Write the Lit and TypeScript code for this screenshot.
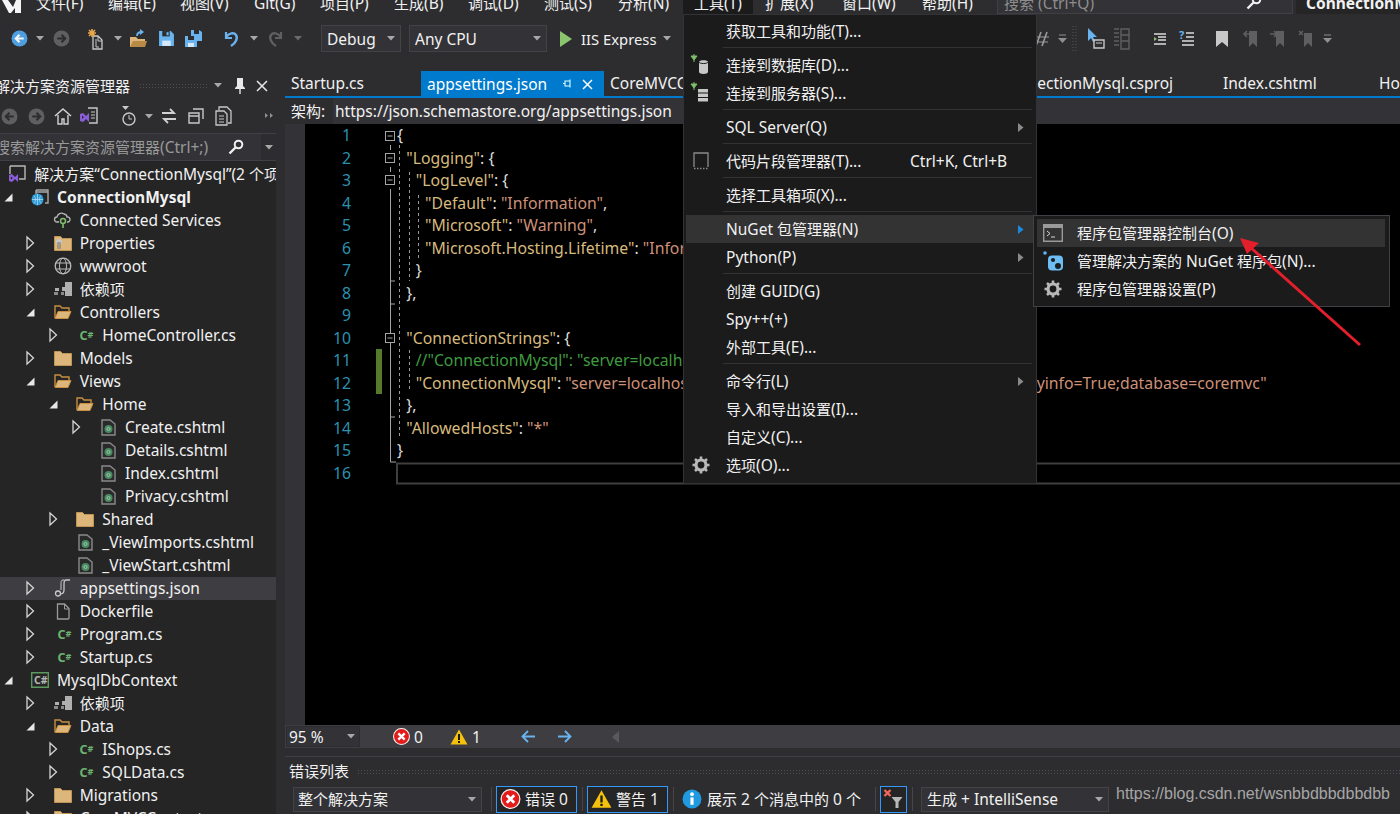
import { LitElement, html, css, svg, TemplateResult } from "lit";
import { customElement } from "lit/decorators.js";

const S = (w: number, h: number, body: unknown, vb = "0 0 16 16") =>
  html`<svg width=${w} height=${h} viewBox=${vb} fill="none">${body}</svg>`;

// CJK runs are set a little smaller than the Latin runs, as in the reference.
const T = (s: string) =>
  s.split(/([\u3000-\u9fff\uff00-\uffef]+)/).map((p, i) => (i % 2 ? html`<span class="cjk">${p}</span>` : p));

const DIM = "#5f5f62";
const ic: Record<string, () => TemplateResult> = {
  back: () => S(17, 17, svg`<circle cx="8" cy="8" r="7.5" fill="#4f9fe0"/><path d="M12 8H5M8 4.5L4.5 8 8 11.5" stroke="#f2f6fa" stroke-width="2"/>`),
  fwdDim: () => S(17, 17, svg`<circle cx="8" cy="8" r="7.5" fill="${DIM}"/><path d="M4 8h7M8 4.5L11.5 8 8 11.5" stroke="#2d2d30" stroke-width="2"/>`),
  backDim: () => S(17, 17, svg`<circle cx="8" cy="8" r="7.5" fill="${DIM}"/><path d="M12 8H5M8 4.5L4.5 8 8 11.5" stroke="#2d2d30" stroke-width="2"/>`),
  caret: () => S(8, 5, svg`<path d="M0 0h8L4 4.5z" fill="#a8a8a8"/>`, "0 0 8 5"),
  caretDim: () => S(8, 5, svg`<path d="M0 0h8L4 4.5z" fill="#6a6a6a"/>`, "0 0 8 5"),
  newp: () => S(20, 22, svg`<path d="M6 8h5l4 4v9H6z" stroke="#c8c8c8" stroke-width="1.3"/><path d="M11 8v5h4" stroke="#c8c8c8"/><path d="M9 11v8h3" stroke="#c8c8c8"/><path d="M5 1v8M1 5h8M2 2l6 6M8 2L2 8" stroke="#e8a84a" stroke-width="1.6"/>`, "0 0 20 22"),
  open: () => S(20, 20, svg`<path d="M1 8h6l2 2h7v8H1z" fill="#dcb67a"/><path d="M1 18l3-6h14l-2 6z" fill="#b98a45"/><path d="M8 7c0-3 2-4 5-4" stroke="#69b4ef" stroke-width="1.8"/><path d="M11 0l4 3-4 3z" fill="#69b4ef"/>`, "0 0 20 20"),
  save: () => S(17, 17, svg`<path d="M1 1h11l3 3v11H1z" fill="#69b4ef"/><path d="M4 1h7v5H4z" fill="#2d2d30"/><path d="M8 2h2v3H8z" fill="#69b4ef"/><path d="M4 10h8v5H4z" fill="#d5e9fa"/>`),
  saveall: () => S(19, 19, svg`<path d="M7 1h8l3 2v9H7z" fill="#69b4ef"/><path d="M10 1h5v4h-5z" fill="#2d2d30"/><path d="M1 7h10l2 2v9H1z" fill="#69b4ef"/><path d="M4 7h6v4H4z" fill="#2d2d30"/><path d="M4 14h6v4H4z" fill="#d5e9fa"/>`, "0 0 19 19"),
  undo: () => S(19, 20, svg`<path d="M4 3v6h6" stroke="#69b4ef" stroke-width="2.2"/><path d="M4 8c3-4 8-5 10-2 2 3 0 8-5 11" stroke="#69b4ef" stroke-width="2.4"/>`, "0 0 19 20"),
  redo: () => S(19, 20, svg`<path d="M15 3v6H9" stroke="${DIM}" stroke-width="2.2"/><path d="M15 8c-3-4-8-5-10-2-2 3 0 8 5 11" stroke="${DIM}" stroke-width="2.4"/>`, "0 0 19 20"),
  play: () => S(14, 18, svg`<path d="M1 1l12 8-12 8z" fill="#8bc66f"/>`, "0 0 14 18"),
  slashes: () => S(20, 20, svg`<path d="M8 3L3 17M14 3L9 17" stroke="#9a9a9a" stroke-width="1.6"/><path d="M2 8h14M1 13h14" stroke="#9a9a9a"/>`, "0 0 20 20"),
  grip: () => S(5, 28, svg`<path d="M1 1v26M4 1v26" stroke="#55555a" stroke-dasharray="1 2"/>`, "0 0 5 28"),
  pointer: () => S(18, 24, svg`<path d="M1 1v13l3-3 2 4 2-1-2-4h4z" fill="#69b4ef"/><path d="M7 13h10v8H7z" stroke="#c8c8c8" stroke-width="1.4"/><path d="M9 16h6" stroke="#c8c8c8"/>`, "0 0 18 24"),
  outlineDim: () => S(18, 22, svg`<path d="M1 1h5M1 5h5M1 9h5M1 13h5M1 17h5" stroke="${DIM}" stroke-width="1.4"/><path d="M8 1h8v20H8zM8 7h8M8 13h8" stroke="${DIM}" stroke-width="1.4"/>`, "0 0 18 22"),
  lines1: () => S(14, 14, svg`<path d="M1 2h12M5 5h8M5 8h8M1 12h12" stroke="#dcdcdc" stroke-width="1.4"/><path d="M1 5l3 2-3 2z" fill="#8bc66f"/>`, "0 0 14 14"),
  lines2: () => S(16, 17, svg`<text x="0" y="9" font-size="11" font-weight="700" fill="#69b4ef" font-family="Noto Sans">?</text><path d="M7 3h8M7 7h8M3 11h12M3 15h12" stroke="#dcdcdc" stroke-width="1.4"/>`, "0 0 16 17"),
  bookmark: () => S(14, 18, svg`<path d="M1 1h12v16l-6-5-6 5z" fill="#c8c8c8"/>`, "0 0 14 18"),
  bmPrev: () => S(16, 18, svg`<path d="M6 1h8v16l-4-4-4 4z" fill="${DIM}"/><path d="M7 4H1M4 1L1 4l3 3" stroke="${DIM}" stroke-width="1.6"/>`, "0 0 16 18"),
  bmNext: () => S(16, 18, svg`<path d="M6 1h8v16l-4-4-4 4z" fill="${DIM}"/><path d="M0 4h6M4 1l3 3-3 3" stroke="${DIM}" stroke-width="1.6"/>`, "0 0 16 18"),
  bmClear: () => S(16, 18, svg`<path d="M6 3h8v14l-4-4-4 4z" fill="${DIM}"/><path d="M1 1l4 4M5 1L1 5" stroke="${DIM}" stroke-width="1.4"/>`, "0 0 16 18"),
  caretBar: () => S(9, 9, svg`<path d="M1 1h7" stroke="#8f8f8f"/><path d="M0 4h9L4.5 9z" fill="#8f8f8f"/>`, "0 0 9 9"),
  home: () => S(18, 18, svg`<path d="M1 9l8-7 8 7" stroke="#d0d0d0" stroke-width="1.6"/><path d="M4 8v9h4v-5h2v5h4V8" stroke="#d0d0d0" stroke-width="1.4"/>`, "0 0 18 18"),
  vsdoc: () => S(20, 18, svg`<path d="M8 1h9v15H9" stroke="#c8c8c8" stroke-width="1.4"/><path d="M11 5h4M11 8h4M11 11h4" stroke="#c8c8c8"/><path d="M0 7l3-1 3 3 3-3v9l-3-3-3 3-3-1z" fill="#8a5ed8"/><path d="M2 8.500v3.500l2-2z" fill="#2d2d30"/>`, "0 0 20 18"),
  clock: () => S(16, 22, svg`<path d="M1 1h7L4.500 5z" fill="#c8c8c8"/><circle cx="8" cy="14" r="6" stroke="#c8c8c8" stroke-width="1.4"/><path d="M8 10v4h3" stroke="#c8c8c8"/>`, "0 0 16 22"),
  sync: () => S(16, 16, svg`<path d="M1 5h12M9 1l4 4-4 0M15 11H3M7 15l-4-4 4 0" stroke="#d0d0d0" stroke-width="1.8"/>`),
  copy: () => S(16, 16, svg`<path d="M5 1h10v10" stroke="#c8c8c8" stroke-width="1.4"/><path d="M1 5h10v10H1zM1 8h10" stroke="#c8c8c8" stroke-width="1.400"/>`),
  docs: () => S(17, 20, svg`<path d="M4 4V1h8l4 4v12h-3" stroke="#c8c8c8" stroke-width="1.3"/><path d="M1 5h8l3 3v11H1z" stroke="#c8c8c8" stroke-width="1.3"/><path d="M4 10h5M4 13h5M4 16h5" stroke="#c8c8c8"/>`, "0 0 17 20"),
  chev: () => S(8, 6, svg`<path d="M0 0l3 2.500L0 5zM5 0l3 2.500L5 5z" fill="#8f8f8f"/>`, "0 0 8 6"),
  key: () => S(16, 16, svg`<circle cx="10.500" cy="5.500" r="3.800" stroke="#f1f1f1" stroke-width="2"/><path d="M7.500 8.500L1.500 14.500" stroke="#f1f1f1" stroke-width="2.400"/>`),
  folder: () => S(18, 16, svg`<path d="M0.500 1.500h6l2 2h9v12H0.500z" fill="#dcb67a" stroke="#c09553"/>`, "0 0 18 16"),
  folderOpen: () => S(18, 16, svg`<path d="M1 14V2h5l2 2h7v3" stroke="#c78f3f" stroke-width="1.400"/><path d="M1 14.500l3-7h13l-3 7z" fill="#dcb67a" stroke="#c78f3f"/>`, "0 0 18 16"),
  props: () => S(18, 16, svg`<path d="M0.500 1.500h6l2 2h9v12H0.500z" fill="#dcb67a" stroke="#c09553"/><circle cx="5" cy="7" r="3" fill="#c8c8c8"/><path d="M5 7v7" stroke="#2d2d30" stroke-width="2.500"/><path d="M5 7v7" stroke="#c8c8c8" stroke-width="1.400"/>`, "0 0 18 16"),
  globe: () => S(18, 18, svg`<circle cx="9" cy="9" r="7.800" stroke="#b8b8b8" stroke-width="1.300"/><ellipse cx="9" cy="9" rx="3.500" ry="7.800" stroke="#b8b8b8"/><path d="M1.500 6h15M1.500 12h15" stroke="#b8b8b8"/>`, "0 0 18 18"),
  deps: () => S(18, 14, svg`<path d="M11 0h7v7h-7zM1 6h4v3H1zM8 5h4v4H8zM11 7h7v7h-7z" fill="#b0b0b0"/><path d="M0 10h4v3H0zM7 10h3v3H7z" fill="#8a8a8a"/>`, "0 0 18 14"),
  cloud: () => S(18, 18, svg`<path d="M5 11H3a2.500 2.500 0 0 1 0-5c.5-3 4-5 7-3 2 .3 3 1.500 3 3a2.500 2.500 0 0 1 1 5h-1" stroke="#b8b8b8" stroke-width="1.300"/><circle cx="9" cy="10" r="2.500" stroke="#7fbf6a" stroke-width="1.500"/><path d="M9 12.500V17" stroke="#7fbf6a" stroke-width="1.600"/>`, "0 0 18 18"),
  cs: () => html`<svg width="16" height="12" viewBox="-2.500 0 16 12"><text x="0" y="11" font-size="12.500" font-weight="700" fill="#6db36f" font-family="Noto Sans">C</text><text x="8" y="9" font-size="9" font-weight="700" fill="#6db36f" font-family="Noto Sans">#</text></svg>`,
  razor: () => S(15, 17, svg`<path d="M1 1h8l5 4v11H1z" stroke="#8a8a8a" stroke-width="1.400" fill="#2a2a2b"/><circle cx="7.500" cy="10" r="4" fill="#4a8a62"/><circle cx="7.500" cy="10" r="1.500" stroke="#9cc8aa"/>`, "0 0 15 17"),
  json: () => S(18, 18, svg`<path d="M16 1h-4c-2 0-2 2-2 4v6c0 3-1 4-4 4" stroke="#c8c8c8" stroke-width="1.300"/><path d="M10 1H9C7 1 7 3 7 5v6" stroke="#c8c8c8"/><circle cx="4" cy="14.500" r="2.500" stroke="#c8c8c8" stroke-width="1.300"/>`, "0 0 18 18"),
  doc: () => S(14, 17, svg`<path d="M1.500 1h7l4.500 4.500V15a1 1 0 0 1-1 1h-10.500z" stroke="#9a9a9a" stroke-width="1.300"/><path d="M8.500 1v5H13" stroke="#9a9a9a"/>`, "0 0 14 17"),
  sln: () => S(18, 18, svg`<path d="M2 1h15v13h-6" stroke="#b8b8b8" stroke-width="1.400"/><path d="M2 1v8" stroke="#b8b8b8" stroke-width="1.400"/><path d="M1 10l3-1 3 3 3-3v8l-3-3-3 3-3-1z" fill="#8a5ed8"/><path d="M2.800 11.500v3l2-1.500z" fill="#252526"/>`, "0 0 18 18"),
  webproj: () => S(18, 17, svg`<path d="M5 1h12v13h-3" stroke="#a8a8a8" stroke-width="1.400"/><path d="M5 1v4M5 3h12" stroke="#a8a8a8" stroke-width="1.400"/><circle cx="6.500" cy="10.500" r="6" fill="#2e9bd6"/><path d="M1 10.500h11M6.500 5v11M3 6.500c2 2.500 2 5.500 0 8M10 6.500c-2 2.500-2 5.500 0 8" stroke="#bfe3f5" stroke-width=".7"/>`, "0 0 18 17"),
  csproj: () => html`<svg width="18" height="16" viewBox="0 0 18 16"><path d="M.7.7h16.600v14.600H.7z" stroke="#5a9a5e" stroke-width="1.400" fill="none"/><text x="3" y="12" font-size="10.500" font-weight="700" fill="#b8b8b8" font-family="Noto Sans">C#</text></svg>`,
  plugDb: () => S(22, 22, svg`<path d="M1 2h6L4 6z M4 0v2M4 6v2" stroke="#7fbf6a" fill="#7fbf6a"/><path d="M9 8c0-2.500 9-2.500 9 0v10c0 2.500-9 2.500-9 0z" fill="#c8c8c8"/><path d="M9 8c0 2 9 2 9 0" stroke="#1b1b1c"/>`, "0 0 22 22"),
  plugSv: () => S(22, 22, svg`<path d="M1 2h6L4 6z M4 0v2M4 6v2" stroke="#7fbf6a" fill="#7fbf6a"/><path d="M8 7h10v3.500H8zM8 11.500h10V15H8zM8 16h10v3.500H8z" fill="#c8c8c8"/>`, "0 0 22 22"),
  snippet: () => S(16, 18, svg`<path d="M1 15V1h14v14" stroke="#8a8a8a" stroke-width="1.300"/><path d="M1 16.500h14" stroke="#8a8a8a" stroke-width="1.300" stroke-dasharray="1.500 1.500"/>`, "0 0 16 18"),
  gear: () => S(18, 18, svg`<circle cx="9" cy="9" r="5" stroke="#b8b8b8" stroke-width="3.200"/><path d="M9 .5v3M9 14.500v3M.5 9h3M14.500 9h3M3 3l2.200 2.200M12.800 12.800L15 15M3 15l2.200-2.200M12.800 5.200L15 3" stroke="#b8b8b8" stroke-width="2.600"/>`, "0 0 18 18"),
  console: () => S(20, 18, svg`<path d="M.7.7h18.600v16.600H.7z" stroke="#9a9a9a" stroke-width="1.400"/><path d="M1 1h18v3H1z" fill="#9a9a9a"/><path d="M4 7l3 2.500L4 12M8 13h4" stroke="#d8d8d8"/>`, "0 0 20 18"),
  nuget: () => S(20, 20, svg`<circle cx="2" cy="2" r="1.800" fill="#5fb4f2"/><rect x="5" y="4.500" width="15" height="15" rx="4" fill="#6cbcf5"/><circle cx="10" cy="9" r="2.100" fill="#1b1b1c"/><circle cx="15" cy="15" r="3" fill="#1b1b1c"/>`, "0 0 20 20"),
  err: () => S(17, 17, svg`<circle cx="8" cy="8" r="7.500" fill="#e51a1a" stroke="#f2f2f2"/><path d="M5 5l6 6M11 5l-6 6" stroke="#fff" stroke-width="2.200"/>`),
  warn: () => S(18, 16, svg`<path d="M9 .5l8.500 15H.5z" fill="#f4c20d"/><path d="M9 5v6M9 12v2" stroke="#1b1b1c" stroke-width="2"/>`, "0 0 18 16"),
  arrL: () => S(15, 13, svg`<path d="M14 6.500H2M7 1L1.500 6.500 7 12" stroke="#69b4ef" stroke-width="1.800"/>`, "0 0 15 13"),
  arrR: () => S(15, 13, svg`<path d="M1 6.500h12M8 1l5.500 5.500L8 12" stroke="#69b4ef" stroke-width="1.800"/>`, "0 0 15 13"),
  triL: () => S(7, 12, svg`<path d="M7 0v12L0 6z" fill="#5a5a5d"/>`, "0 0 7 12"),
  info: () => S(20, 20, svg`<circle cx="9.500" cy="9.500" r="9" fill="#1f9ae0"/><path d="M9.500 8v7" stroke="#fff" stroke-width="3"/><circle cx="9.500" cy="5" r="1.800" fill="#fff"/>`, "0 0 19 19"),
  filter: () => S(20, 20, svg`<path d="M1 1l6 6M7 1L1 7" stroke="#f0685a" stroke-width="2.400"/><path d="M8 8h11l-4 5v6h-3v-6z" fill="#b8b8b8"/>`, "0 0 20 20"),
  pin: () => S(12, 18, svg`<path d="M3 1h6v8l2 2v1H1v-1l2-2z" fill="#e8e8e8"/><path d="M6 12v5" stroke="#e8e8e8" stroke-width="1.400"/>`, "0 0 12 18"),
  pinTab: () => S(11, 11, svg`<path d="M3 3h5v5H3zM1 5.500h2M8 1.500v8" stroke="#dff" stroke-width="1.100"/>`, "0 0 11 11"),
  x: (() => S(12, 12, svg`<path d="M1 1l10 10M11 1L1 11" stroke="#e8e8e8" stroke-width="1.500"/>`, "0 0 12 12")) as () => TemplateResult,
  tri: () => S(6, 9, svg`<path d="M0 0l5.500 4.500L0 9z" fill="#8a8a8a"/>`, "0 0 6 9"),
  triB: () => S(6, 9, svg`<path d="M0 0l5.500 4.500L0 9z" fill="#1a8ae0"/>`, "0 0 6 9"),
  treeO: () => S(9, 14, svg`<path d="M1 1l6.500 6L1 13z" stroke="#d4d4d4" stroke-width="1.300"/>`, "0 0 9 14"),
  treeE: () => S(9, 9, svg`<path d="M8.500.5v8h-8z" fill="#e8e8e8"/>`, "0 0 9 9"),
};

type TI = [number, string];
const mainBar: TI[] = [[19,"back"],[40,"caret"],[61,"fwdDim"],[97,"newp"],[118,"caret"],[139,"open"],[166,"save"],[193,"saveall"],[231,"undo"],[254,"caret"],[275,"redo"],[298,"caretDim"]];
const sideBar: TI[] = [[9,"backDim"],[36,"fwdDim"],[63,"home"],[90,"vsdoc"],[129,"clock"],[149,"caret"],[169,"sync"],[196,"copy"],[223,"docs"],[269,"chev"]];
const rightBar: TI[] = [[1043,"slashes"],[1062,"caretBar"],[1074,"grip"],[1096,"pointer"],[1122,"outlineDim"],[1160,"lines1"],[1187,"lines2"],[1222,"bookmark"],[1251,"bmPrev"],[1278,"bmNext"],[1306,"bmClear"],[1327,"caretBar"]];

type Row = [number, "o" | "e" | "", string, string, string?];
const tree: Row[] = [
  [-1,"","sln","解决方案“ConnectionMysql”(2 个项目)"],
  [0,"e","webproj","ConnectionMysql","bold"],
  [1,"","cloud","Connected Services"],
  [1,"o","props","Properties"],
  [1,"o","globe","wwwroot"],
  [1,"o","deps","依赖项"],
  [1,"e","folderOpen","Controllers"],
  [2,"o","cs","HomeController.cs"],
  [1,"o","folder","Models"],
  [1,"e","folderOpen","Views"],
  [2,"e","folderOpen","Home"],
  [3,"o","razor","Create.cshtml"],
  [3,"","razor","Details.cshtml"],
  [3,"","razor","Index.cshtml"],
  [3,"","razor","Privacy.cshtml"],
  [2,"o","folder","Shared"],
  [2,"","razor","_ViewImports.cshtml"],
  [2,"","razor","_ViewStart.cshtml"],
  [1,"o","json","appsettings.json","sel"],
  [1,"o","doc","Dockerfile"],
  [1,"o","cs","Program.cs"],
  [1,"o","cs","Startup.cs"],
  [0,"e","csproj","MysqlDbContext"],
  [1,"o","deps","依赖项"],
  [1,"e","folderOpen","Data"],
  [2,"o","cs","IShops.cs"],
  [2,"o","cs","SQLData.cs"],
  [1,"o","folder","Migrations"],
  [1,"o","folder","CoreMVCContext"],
];

const code: [number, string, [string, string][]][] = [
  [0,"",[["tp","{"]]],
  [1,"",[["tk",'"Logging"'],["tp",": {"]]],
  [2,"",[["tk",'"LogLevel"'],["tp",": {"]]],
  [3,"",[["tk",'"Default"'],["tp",": "],["ts",'"Information"'],["tp",","]]],
  [3,"",[["tk",'"Microsoft"'],["tp",": "],["ts",'"Warning"'],["tp",","]]],
  [3,"",[["tk",'"Microsoft.Hosting.Lifetime"'],["tp",": "],["ts",'"Information"']]],
  [2,"",[["tp","}"]]],
  [1,"",[["tp","},"]]],
  [1,"",[]],
  [1,"",[["tk",'"ConnectionStrings"'],["tp",": {"]]],
  [2,"chg",[["tc",'//"ConnectionMysql": "server=localhost;uid=root;pwd=123456;port=3306;persist",']]],
  [2,"chg",[["tk",'"ConnectionMysql"'],["tp",": "],["ts",'"server=localhost;uid=root;pwd=12345;port=3306;persistsecurityinfo=True;database=coremvc"']]],
  [1,"",[["tp","},"]]],
  [1,"",[["tk",'"AllowedHosts"'],["tp",": "],["ts",'"*"']]],
  [0,"",[["tp","}"]]],
  [0,"",[]],
];

type MI = { t?: string; icon?: string; key?: string; arrow?: boolean; hot?: boolean; sep?: boolean };
const menu: MI[] = [
  { t: "获取工具和功能(T)..." }, { sep: true },
  { t: "连接到数据库(D)...", icon: "plugDb" }, { t: "连接到服务器(S)...", icon: "plugSv" }, { sep: true },
  { t: "SQL Server(Q)", arrow: true }, { sep: true },
  { t: "代码片段管理器(T)...", icon: "snippet", key: "Ctrl+K, Ctrl+B" }, { sep: true },
  { t: "选择工具箱项(X)..." }, { sep: true },
  { t: "NuGet 包管理器(N)", arrow: true, hot: true }, { t: "Python(P)", arrow: true }, { sep: true },
  { t: "创建 GUID(G)" }, { t: "Spy++(+)" }, { t: "外部工具(E)..." }, { sep: true },
  { t: "命令行(L)", arrow: true }, { t: "导入和导出设置(I)..." }, { t: "自定义(C)..." }, { t: "选项(O)...", icon: "gear" },
];
const sub: MI[] = [
  { t: "程序包管理器控制台(O)", icon: "console", hot: true },
  { t: "管理解决方案的 NuGet 程序包(N)...", icon: "nuget" },
  { t: "程序包管理器设置(P)", icon: "gear" },
];

const menus: [string, number][] = [["文件(F)",36],["编辑(E)",108],["视图(V)",180],["Git(G)",254],["项目(P)",320],["生成(B)",394],["调试(D)",468],["测试(S)",544],["分析(N)",618],["工具(T)",694],["扩展(X)",765],["窗口(W)",842],["帮助(H)",922]];

@customElement("app-root")
export class AppRoot extends LitElement {
  static styles = css`
    :host { display: block; width: 1400px; height: 814px; overflow: hidden; position: relative; background: #2d2d30; color: #f1f1f1;
      font: 15.5px/20px "Noto Sans", "Noto Sans CJK SC", sans-serif; }
    .cjk { font-size: 15px; font-family: "Noto Sans CJK SC", sans-serif; }
    svg { display: block; flex: none; overflow: visible; }
    .titlebar { height: 14px; display: flex; overflow: hidden; }
    .mi { flex: none; margin-top: -8px; line-height: 22px; white-space: nowrap; }
    .search { width: 296px; height: 14px; flex: none; box-sizing: border-box; background: #333337; border: 1px solid #3f3f46; border-top: 0; display: flex; align-items: flex-start; justify-content: space-between; padding: 0 30px 0 6px; color: #8d8d8d; position: absolute; left: 997px; top: 0; }
    .search > span { margin-top: -8px; line-height: 22px; }
    .search svg { margin-top: -6px; }
    .wintitle { position: absolute; left: 1296px; top: 0; right: 0; height: 14px; overflow: hidden; background: #252526; font-weight: 700; padding-left: 10px; }
    .wintitle > span { display: block; margin-top: -8px; line-height: 22px; white-space: nowrap; }

    .cell { width: 20px; flex: none; display: flex; justify-content: center; align-items: center; }
    .toolbar { height: 49px; display: flex; align-items: center; flex: none; }
    .combo { box-sizing: border-box; flex: none; height: 27px; background: #333337; border: 1px solid #434346; display: flex; align-items: center; justify-content: space-between; padding: 0 5px; white-space: nowrap; }
    .debug { width: 80px; margin-left: 13px; }
    .anycpu { width: 138px; margin-left: 8px; }
    .playc { margin-left: 9px; }
    .iis { margin-left: 5px; width: 76px; white-space: nowrap; flex: none; font-size: 14.800px; }

    .main { display: flex; height: 751px; }
    .side { width: 276px; flex: none; background: #252526; display: flex; flex-direction: column; overflow: hidden; }
    .sidehead { background: #2d2d30; flex: none; }
    .stitle { height: 27px; padding-top: 9px; display: flex; align-items: center; }
    .stitle .t { margin-left: -5px; white-space: nowrap; width: 135px; flex: none; }
    .dots { width: 70px; height: 5px; margin-left: 9px; background-image: radial-gradient(#505054 .6px, transparent .8px); background-size: 3px 3px; flex: none; }
    .stitle .c1 { margin-left: 5px; }
    .stitle .c2 { margin-left: 12px; }
    .stitle .c3 { margin-left: 10px; }
    .stool { height: 34px; }
    .ssearch { height: 28px; flex: none; box-sizing: border-box; background: #333337; border-top: 1px solid #3f3f46; border-bottom: 1px solid #3f3f46; display: flex; align-items: center; color: #999; }
    .ssearch .t { margin-left: -5px; flex: 1; white-space: nowrap; overflow: hidden; }
    .ssearch .k { width: 16px; flex: none; margin-right: 25px; }
    .ssearch .dd { width: 15px; align-self: stretch; background: #2d2d30; display: flex; align-items: center; justify-content: center; margin-left: -8px; flex: none; }
    .tree { padding-top: 1.500px; flex: none; }
    .row { height: 23px; display: flex; align-items: center; white-space: nowrap; }
    .row.sel { background: #3e3e42; }
    .row.bold .lab { font-weight: 700; }
    .arr { width: 16px; flex: none; display: flex; justify-content: center; }
    .icn { width: 18px; margin-left: 15px; margin-right: 8px; flex: none; display: flex; justify-content: center; }

    .gap { width: 9px; flex: none; }
    .work { flex: 1; min-width: 0; display: flex; flex-direction: column; }
    .tabs { height: 25px; margin-top: 8px; display: flex; flex: none; white-space: nowrap; overflow: hidden; }
    .tab { flex: none; box-sizing: border-box; padding-left: 6px; line-height: 24px; overflow: hidden; }
    .t1 { width: 136px; }
    .t2 { width: 183px; background: #007acc; color: #fff; display: flex; align-items: center; }
    .t2 span { width: 135px; flex: none; }
    .t2 .x { margin-left: 9px; margin-top: 1px; }
    .t3 { width: 389px; }
    .t4 { width: 224px; }
    .t5 { width: 156px; }
    .blueline { height: 2px; background: #007acc; flex: none; }
    .schema { height: 26px; flex: none; display: flex; align-items: center; padding-left: 6px; }
    .schema .u { margin-left: 5px; flex: 1; height: 100%; padding-left: 2px; display: flex; align-items: center; background: #333337; }
    .schema .l { width: 37px; flex: none; }
    .editor { flex: 1; display: flex; background: #000; position: relative; min-height: 0; }
    .margin { width: 20px; background: #333337; flex: none; }
    .lines { flex: 1; min-width: 0; overflow: hidden; font-size: 15.800px; }
    .ln { height: 22.530px; display: flex; align-items: center; white-space: nowrap; }
    .num { width: 46px; text-align: right; color: #2b91af; flex: none; }
    .bar { width: 6px; margin-left: 25px; align-self: stretch; flex: none; }
    .bar.chg { background: #567a2b; }
    .src { margin-left: 15px; white-space: pre; }
    .tp { color: #dcdcdc; } .tk { color: #d7ba7d; } .ts { color: #ce9178; } .tc { color: #3f9b3f; }
    .over { position: absolute; left: 0; top: 0; pointer-events: none; }

    .status { height: 23px; flex: none; background: #3e3e42; display: flex; align-items: center; }
    .zoom { box-sizing: border-box; width: 74px; height: 21px; margin-left: 1px; background: #333337; border: 1px solid #2d2d30; display: flex; align-items: center; justify-content: space-between; padding: 0 4px 0 2px; }
    .status .v { line-height: 20px; }
    .status .e1 { margin-left: 33px; }
    .status .v1 { margin-left: 4px; }
    .status .e2 { margin-left: 27px; }
    .status .e3 { margin-left: 40px; }
    .status .e4 { margin-left: 21px; }
    .status .e5 { margin-left: 40px; }

    .panel { height: 57px; flex: none; margin-top: 8px; border-top: 1px solid #3f3f46; }
    .ptitle { height: 28px; display: flex; align-items: center; padding-left: 4px; }
    .ptitle .dots { flex: 1; margin-left: 8px; }
    .ptool { display: flex; align-items: center; height: 28px; padding-left: 8px; white-space: nowrap; }
    .pc1 { width: 189px; height: 25px; margin-right: 9px; padding: 0 5px 0 4px; }
    .psep { width: 1px; height: 24px; background: #46464a; flex: none; }
    .tog { box-sizing: border-box; height: 27px; border: 1px solid #3399ff; background: #252526; display: flex; align-items: center; flex: none; width: 81px; padding-left: 3px; gap: 4px; margin: 0 5px 0 4px; }
    .tog svg { width: 21px; height: 20px; }
    .tog.f { width: 27px; padding-left: 2px; }
    .inf { display: flex; align-items: center; gap: 5px; margin-left: 8px; width: 193px; flex: none; }
    .pc2 { width: 188px; height: 25px; margin-left: 8px; padding: 0 5px 0 5px; }
    .wm { font: 16px/20px "Liberation Sans", sans-serif; color: #a6a6a6; margin-left: 7px; margin-top: -10px; flex: none; }

    .menu { position: absolute; background: #1b1b1c; border: 1px solid #333337; box-sizing: border-box; padding: 2px 2px; }
    .m1 { left: 683px; top: 14px; width: 354px; height: 470px; }
    .m2 { left: 1033px; top: 215px; width: 357px; height: 92px; border-color: #3f3f46; padding-top: 3px; }
    .item { height: 28px; display: flex; align-items: center; position: relative; white-space: nowrap; }
    .item.hot { background: #333334; }
    .micon { width: 30px; margin-right: 10px; flex: none; display: flex; justify-content: center; }
    .item .key { position: absolute; left: 224px; }
    .item .ar { position: absolute; right: 10px; }
    .msep { height: 1px; margin: 2px 2px 3px 37px; background: #333337; }
    .m2 .item { margin: 0 1px; }
    .m2 .item.hot { margin-right: 2px; }
    .m2 .micon { width: 31px; margin-right: 9px; }
    .tooltab { position: absolute; left: 683px; top: 0; height: 14px; width: 70px; background: #1b1b1c; overflow: hidden; padding-left: 11px; box-sizing: border-box; }
    .tooltab > span { display: block; margin-top: -8px; line-height: 22px; white-space: nowrap; }
    .arrow { position: absolute; left: 0; top: 0; pointer-events: none; }
  `;

  cells(items: TI[], start: number) {
    let right = start;
    return items.map(([x, n]) => {
      const ml = x - 10 - right;
      right = x + 10;
      return html`<div class="cell" style="margin-left:${ml}px">${ic[n]()}</div>`;
    });
  }

  renderTitle() {
    return html`<div class="titlebar">
      ${S(21, 14, svg`<path d="M2 0h6l5 7 3-7h5v13h-6V8l-4 5H9z" fill="#f5f5f5"/>`, "0 0 21 14")}
      ${menus.map(([t, x], i) => html`<div class="mi" style="width:${(menus[i + 1]?.[1] ?? 997) - x}px;margin-left:${i === 0 ? x - 21 : 0}px">${T(t)}</div>`)}
      <div class="search"><span>${T("搜索 (Ctrl+Q)")}</span>${ic.key()}</div>
      <div class="wintitle"><span>ConnectionMysql</span></div>
    </div>`;
  }

  renderToolbar() {
    return html`<div class="toolbar">
      ${this.cells(mainBar, 0)}
      <div class="combo debug"><span>Debug</span>${ic.caret()}</div>
      <div class="combo anycpu"><span>Any CPU</span>${ic.caret()}</div>
      <div class="cell playc">${ic.play()}</div>
      <div class="iis">IIS Express</div>
      <div class="cell">${ic.caret()}</div>
      ${this.cells(rightBar, 677)}
    </div>`;
  }

  renderSide() {
    return html`<aside class="side">
      <div class="sidehead">
        <div class="stitle"><span class="t">${T("解决方案资源管理器")}</span><div class="dots"></div>
          <div class="c1">${ic.caret()}</div><div class="c2">${ic.pin()}</div><div class="c3">${ic.x()}</div></div>
        <div class="toolbar stool">${this.cells(sideBar, 0)}</div>
      </div>
      <div class="ssearch"><span class="t">${T("搜索解决方案资源管理器(Ctrl+;)")}</span><div class="k">${ic.key()}</div><div class="dd">${ic.caret()}</div></div>
      <div class="tree">
        ${tree.map(([lv, a, i, t, f]) => html`<div class="row ${f ?? ""}">
          <div class="arr" style="margin-left:${lv * 22.67}px">${a === "o" ? ic.treeO() : a === "e" ? ic.treeE() : ""}</div>
          <div class="icn">${ic[i]()}</div><span class="lab">${T(t)}</span></div>`)}
      </div>
    </aside>`;
  }

  renderEditor() {
    return html`<div class="editor">
      <div class="margin"></div>
      <div class="lines">
        ${code.map(([ind, ch, toks], i) => html`<div class="ln">
          <span class="num">${i + 1}</span><span class="bar ${ch}"></span>
          <span class="src" style="padding-left:${ind * 9.35}px">${toks.map(([c, t]) => html`<span class=${c}>${t}</span>`)}</span>
        </div>`)}
      </div>
      <svg class="over" width="1115" height="601" viewBox="285 124 1115 601">
        <g stroke="#a5a5a5" fill="none">
          <path d="M390.500 145V150M390.500 167V172M390.500 189V462H396M390.500 281H395M390.500 304H395M390.500 417H395" />
          ${[131, 153, 175, 333].map((y) => svg`<rect x="385.500" y="${y}.5" width="9" height="9" fill="#000"/><path d="M387.500 ${y + 5}h5"/>`)}
        </g>
        <g stroke="#9a9a9a" stroke-dasharray="3 3" fill="none">
          <path d="M399.500 145V436M409.500 172V281M409.500 350V392M418.500 195V258"/>
        </g>
        <rect x="397" y="463.500" width="1010" height="20" fill="none" stroke="#3f3f3f" stroke-width="2"/>
      </svg>
    </div>`;
  }

  renderMenu(list: MI[], cls: string) {
    return html`<div class="menu ${cls}">
      ${list.map((m) => m.sep ? html`<div class="msep"></div>` : html`<div class="item ${m.hot ? "hot" : ""}">
        <div class="micon">${m.icon ? ic[m.icon]() : ""}</div><span>${T(m.t ?? "")}</span>
        ${m.key ? html`<span class="key">${m.key}</span>` : ""}
        ${m.arrow ? html`<span class="ar">${m.hot ? ic.triB() : ic.tri()}</span>` : ""}
      </div>`)}
    </div>`;
  }

  render() {
    return html`
      ${this.renderTitle()}
      ${this.renderToolbar()}
      <div class="main">
        ${this.renderSide()}
        <div class="gap"></div>
        <div class="work">
          <div class="tabs">
            <div class="tab t1">Startup.cs</div>
            <div class="tab t2"><span>appsettings.json</span><div class="pin">${ic.pinTab()}</div><div class="x">${S(11, 11, svg`<path d="M1 1l9 9M10 1l-9 9" stroke="#fff" stroke-width="1.500"/>`, "0 0 11 11")}</div></div>
            <div class="tab t3">CoreMVCContext</div>
            <div class="tab t4">ConnectionMysql.csproj</div>
            <div class="tab t5">Index.cshtml</div>
            <div class="tab">Home</div>
          </div>
          <div class="blueline"></div>
          <div class="schema"><span class="l">${T("架构:")}</span><div class="u">https://json.schemastore.org/appsettings.json</div></div>
          ${this.renderEditor()}
          <div class="status">
            <div class="zoom"><span>95 %</span>${ic.caret()}</div>
            <div class="e1">${ic.err()}</div><span class="v v1">0</span>
            <div class="e2">${ic.warn()}</div><span class="v v1">1</span>
            <div class="e3">${ic.arrL()}</div><div class="e4">${ic.arrR()}</div><div class="e5">${ic.triL()}</div>
          </div>
          <div class="panel">
            <div class="ptitle"><span>${T("错误列表")}</span><div class="dots"></div></div>
            <div class="ptool">
              <div class="combo pc1"><span>${T("整个解决方案")}</span>${ic.caret()}</div>
              <div class="psep"></div>
              <div class="tog">${ic.err()}<span>${T("错误 0")}</span></div>
              <div class="psep"></div>
              <div class="tog">${ic.warn()}<span>${T("警告 1")}</span></div>
              <div class="psep"></div>
              <div class="inf">${ic.info()}<span>${T("展示 2 个消息中的 0 个")}</span></div>
              <div class="psep"></div>
              <div class="tog f">${ic.filter()}</div>
              <div class="psep"></div>
              <div class="combo pc2"><span>${T("生成 + IntelliSense")}</span>${ic.caret()}</div>
              <div class="wm">https://blog.csdn.net/wsnbbdbbdbbdbb</div>
            </div>
          </div>
        </div>
      </div>
      <div class="tooltab"><span>${T("工具(T)")}</span></div>
      ${this.renderMenu(menu, "m1")}
      ${this.renderMenu(sub, "m2")}
      <svg class="arrow" width="1400" height="814">
        <path d="M1360 345L1250 247" stroke="#e21f2b" stroke-width="3"/>
        <path d="M1240 238L1259 243L1247 254Z" fill="#e21f2b"/>
      </svg>
    `;
  }
}
